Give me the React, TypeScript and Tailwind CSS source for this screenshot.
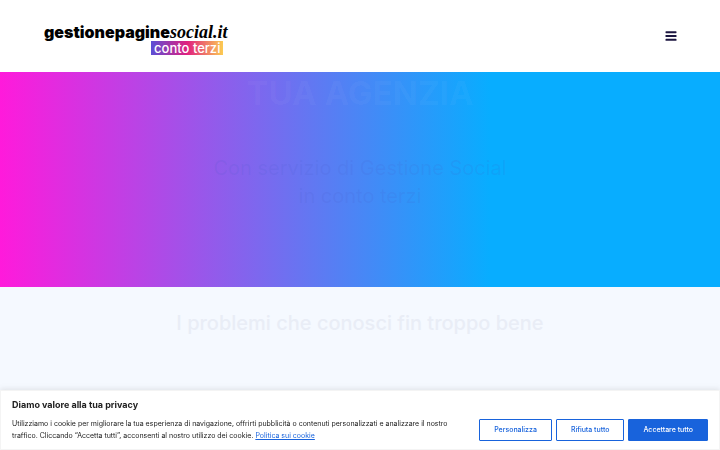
function Logo() {
  return (
    <a href="#" className="flex flex-col items-end pt-1.5 text-black">
      <span className="flex items-baseline text-lg leading-[18px]">
        <span className="text-base leading-[18px] font-black">gestionepagine</span>
        <span className="font-['Liberation_Serif',serif] font-bold italic">social.it</span>
      </span>
      <span className="mr-1 bg-linear-to-r/srgb from-[#5b4fd6] via-[#e01f7f] via-50% to-[#fccb52] px-[3px] text-[13px] leading-[14px] font-medium text-white">
        conto terzi
      </span>
    </a>
  );
}

function Header() {
  return (
    <header className="flex h-[72px] items-center justify-between bg-white pr-[43px] pl-11">
      <Logo />
      <button type="button" aria-label="Menu" className="text-[#1c1640]">
        <svg width="12" height="10" viewBox="0 0 12 10" fill="currentColor" aria-hidden="true">
          <rect x="0.5" y="0.2" width="11" height="2" rx="0.6" />
          <rect x="0.5" y="4" width="11" height="2" rx="0.6" />
          <rect x="0.5" y="7.8" width="11" height="2" rx="0.6" />
        </svg>
      </button>
    </header>
  );
}

function Hero() {
  return (
    <section className="bg-linear-to-r/srgb from-[#ff1adb] to-[#08adff] to-68% pb-[77px] text-center">
      <h1 className="text-[33px] leading-[42px] font-bold text-white/4">TUA AGENZIA</h1>
      <p className="mt-10 text-xl leading-7 text-[#465ac8]/12">
        Con servizio di Gestione Social
        <br />
        in conto terzi
      </p>
    </section>
  );
}

function Problems() {
  return (
    <section className="min-h-screen bg-[#f5f9ff] pt-6 text-center">
      <h2 className="text-xl leading-6 font-medium text-[#e9edf6]">
        I problemi che conosci fin troppo bene
      </h2>
    </section>
  );
}

function CookieBanner() {
  return (
    <aside
      aria-label="Privacy"
      className="fixed inset-x-0 bottom-0 border border-[#f4f4f4] bg-white px-[11px] pt-2 pb-[7px] text-[#212121] shadow-[0_-1px_5px_rgba(172,171,171,0.3)]"
    >
      <p className="text-[9px] leading-3 font-bold">Diamo valore alla tua privacy</p>
      <div className="mt-[7px] flex items-center justify-between gap-6">
        <p className="text-[7px] leading-3">
          Utilizziamo i cookie per migliorare la tua esperienza di navigazione, offrirti pubblicità o contenuti
          personalizzati e analizzare il nostro traffico. Cliccando “Accetta tutti”, acconsenti al nostro utilizzo dei
          cookie.{' '}
          <a href="#" className="text-[#1863dc] underline">
            Politica sui cookie
          </a>
        </p>
        <div className="flex shrink-0 gap-1 text-[7px] leading-3 font-medium">
          <button type="button" className="rounded-[1px] border border-[#1863dc] px-[14px] py-1 text-[#1863dc]">
            Personalizza
          </button>
          <button type="button" className="rounded-[1px] border border-[#1863dc] px-[14px] py-1 text-[#1863dc]">
            Rifiuta tutto
          </button>
          <button type="button" className="rounded-[1px] border border-[#1863dc] bg-[#1863dc] px-[14px] py-1 text-white">
            Accettare tutto
          </button>
        </div>
      </div>
    </aside>
  );
}

export default function App() {
  return (
    <div className="h-screen overflow-hidden bg-white font-['Inter',sans-serif]">
      <Header />
      <Hero />
      <Problems />
      <CookieBanner />
    </div>
  );
}
